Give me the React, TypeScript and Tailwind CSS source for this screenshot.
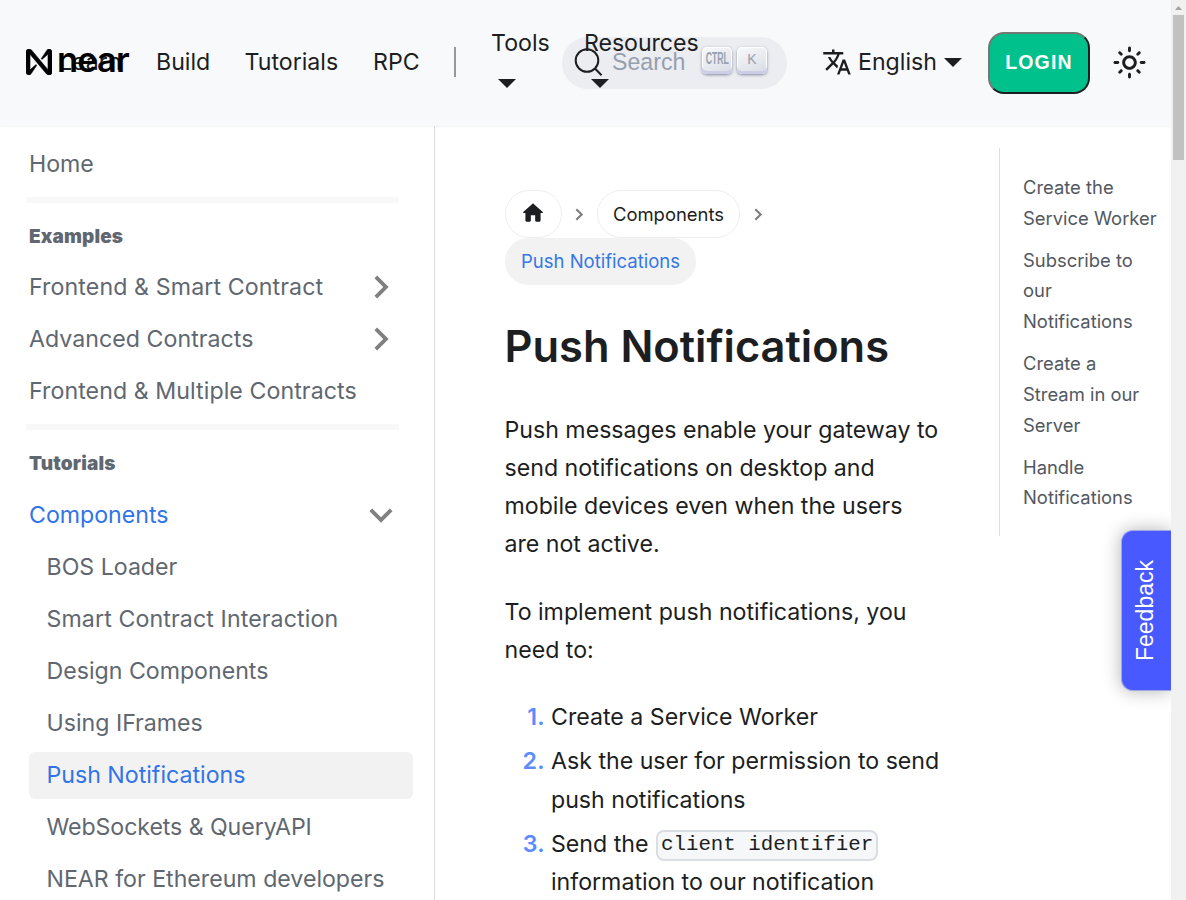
import type { ReactNode } from "react";

const Caret = ({ className = "" }: { className?: string }) => (
  <svg className={className} width="18" height="9" viewBox="0 0 18 9" fill="currentColor">
    <path d="M0 0h18L9 9z" />
  </svg>
);

const Chevron = ({ open = false }: { open?: boolean }) => (
  <svg width="46" height="46" viewBox="0 0 24 24" className={open ? "rotate-180" : "rotate-90"} fill="#808080">
    <path d="M7.41 15.41 12 10.83l4.59 4.58L18 14l-6-6-6 6z" />
  </svg>
);

const Item = ({ children, chevron, active = false, nested = false, blue = false, track = "" }: {
  children: ReactNode; chevron?: "right" | "down"; active?: boolean; nested?: boolean; blue?: boolean; track?: string;
}) => (
  <li
    className={`mb-[5.1px] flex h-[47px] items-center justify-between rounded-[6px] pr-[9px] whitespace-nowrap ${
      nested ? "pl-[17.5px]" : ""
    } ${active ? "bg-[#f2f2f2]" : ""} ${active || blue ? "text-[#3074e8]" : "text-[#606770]"}`}
  >
    <span className={track}>{children}</span>
    {chevron && <Chevron open={chevron === "down"} />}
  </li>
);

const Heading = ({ children }: { children: ReactNode }) => (
  <h3 className="text-[19px] leading-[24px] font-black tracking-[0.15px] text-[#606770]">{children}</h3>
);

const Crumb = () => (
  <svg width="9" height="13" viewBox="0 0 9 13" fill="none" stroke="#7d7d7d" strokeWidth="2.1">
    <path d="M1.3 1.2 6.7 6.5 1.3 11.8" />
  </svg>
);

const Key = ({ children, className }: { children: ReactNode; className: string }) => (
  <kbd className={`flex h-[27px] w-[30px] items-center justify-center rounded-[5px] bg-linear-[-26deg,#d8dce3,#f8f9fb] pb-[3px] text-[#969faf] shadow-[inset_0_-3px_0_0_#cdcde6,inset_0_0_1px_1px_#fff,0_1px_3px_0_rgba(30,35,90,0.5)] ${className}`}>
    {children}
  </kbd>
);

const toc = [
  ["Create the", "Service Worker"],
  ["Subscribe to", "our", "Notifications"],
  ["Create a", "Stream in our", "Server"],
  ["Handle", "Notifications"],
];

export default function App() {
  return (
    <div className="relative flex h-[900px] w-[1186px] overflow-hidden bg-white font-['Inter',sans-serif] text-[23.15px] leading-[38px] text-[#1c1e21] [text-rendering:optimizeLegibility]">
      <div className="flex w-[1171px] shrink-0 flex-col">
        <header className="relative z-10 flex h-[126px] shrink-0 items-start bg-[#f8f9fb] pl-[26px] shadow-[0_1px_2px_0_rgba(0,0,0,0.05)]">
          <div className="relative mt-[43px] flex h-[38px] w-[130px] items-center">
            <svg width="26" height="26" viewBox="0 0 90 90" fill="#000" stroke="#000" strokeWidth="2">
              <path d="M72.2 4.6 53.4 32.5c-1.3 1.9 1.2 4.2 3 2.6L74.9 19c.5-.4 1.2-.1 1.2.6v50.3c0 .7-.9 1-1.3.5L18.9 3.5C17 1.3 14.3 0 11.5 0h-2C4.3 0 0 4.3 0 9.6v70.8C0 85.7 4.3 90 9.6 90c3.3 0 6.4-1.7 8.2-4.6l18.8-27.9c1.3-1.9-1.2-4.2-3-2.6L15.100 71c-.5.4-1.200.1-1.200-.6V20.100c0-.7.9-1 1.300-.5l55.900 66.900c1.900 2.200 4.600 3.500 7.400 3.500h2c5.300 0 9.600-4.300 9.600-9.600V9.600C90 4.300 85.700 0 80.400 0c-3.400 0-6.500 1.700-8.200 4.600z" />
            </svg>
            <span className="absolute left-[33px]">Learn</span>
            <span className="absolute top-[-2px] left-[31px] text-[34.500px] font-semibold tracking-[-0.900px] text-black">near</span>
          </div>
          <nav className="mt-[43px] flex items-center">
            <span className="w-[88.500px]">Build</span>
            <span className="w-[128.500px]">Tutorials</span>
            <span className="w-[81px]">RPC</span>
            <span className="h-[30px] w-[2px] bg-[#96989b]" />
          </nav>
          <div className="mt-[24px] ml-[35px] flex w-[71px] flex-col">
            <span>Tools</span>
            <Caret className="mt-[17px] ml-[7px]" />
          </div>
          <div className="relative mt-[37px] flex h-[52px] w-[225px] items-center rounded-full bg-[#ebedf0] pl-[12px]">
            <svg width="30" height="30" viewBox="0 0 30 30" fill="none" stroke="#1c1e21" strokeWidth="2">
              <circle cx="13" cy="12.500" r="11.300" />
              <path d="m21 20.500 6.500 6.800" />
            </svg>
            <span className="-mt-[3px] ml-[8px] font-['Liberation_Sans',sans-serif] text-[23.150px] text-[#969faf]">Search</span>
            <div className="absolute top-[10px] left-[140px] flex gap-[5px]">
              <Key className="font-['Liberation_Sans',sans-serif] text-[16px]">
                <span className="scale-x-[0.54] font-bold">CTRL</span>
              </Key>
              <Key className="font-['Liberation_Sans',sans-serif] text-[14px]">K</Key>
            </div>
            <div className="absolute top-[-13px] left-[22px] flex flex-col">
              <span className="tracking-[-0.050px]">Resources</span>
              <Caret className="mt-[17px] ml-[7px]" />
            </div>
          </div>
          <div className="mt-[43px] ml-[35px] flex w-[141px] items-center">
            <svg width="30" height="30" viewBox="0 0 24 24" fill="currentColor">
              <path d="M12.870 15.070l-2.540-2.510.03-.03c1.740-1.940 2.980-4.170 3.710-6.530H17V4h-7V2H8v2H1v1.990h11.170C11.500 7.920 10.440 9.750 9 11.350 8.070 10.320 7.300 9.190 6.690 8h-2c.73 1.630 1.730 3.170 2.980 4.560l-5.090 5.020L4 19l5-5 3.110 3.110.76-2.040zM18.500 10h-2L12 22h2l1.120-3h4.750L21 22h2l-4.500-12zm-2.620 7l1.620-4.330L19.120 17h-3.240z" />
            </svg>
            <span className="ml-[6px]">English</span>
            <Caret className="mt-[1px] mr-[1px] ml-auto" />
          </div>
          <button className="mt-[32px] ml-[25px] h-[62px] w-[102px] rounded-[16px] border-2 border-t-[#767676] border-r-[#1c1e21] border-b-[#1c1e21] border-l-[#767676] bg-[#00c08b] font-['Liberation_Sans',sans-serif] text-[19.500px] leading-none font-bold tracking-[1.200px] text-white">
            LOGIN
          </button>
          <svg className="mt-[45px] ml-[22px]" width="35" height="35" viewBox="0 0 24 24" fill="currentColor">
            <path d="M12,9c1.650,0,3,1.350,3,3s-1.350,3-3,3s-3-1.350-3-3S10.350,9,12,9 M12,7c-2.760,0-5,2.240-5,5s2.240,5,5,5s5-2.240,5-5 S14.760,7,12,7z M2,13h2c.55,0,1-.45,1-1s-.45-1-1-1H2c-.55,0-1,.45-1,1S1.450,13,2,13z M20,13h2c.55,0,1-.45,1-1s-.45-1-1-1h-2 c-.55,0-1,.45-1,1S19.450,13,20,13z M11,2v2c0,.55,.45,1,1,1s1-.45,1-1V2c0-.55-.45-1-1-1S11,1.450,11,2z M11,20v2 c0,.55,.45,1,1,1s1-.45,1-1v-2c0-.55-.45-1-1-1S11,19.450,11,20z M5.990,4.580c-.39-.39-1.030-.39-1.410,0c-.39,.39-.39,1.030,0,1.410 l1.060,1.060c.39,.39,1.030,.39,1.410,0s.39-1.030,0-1.410L5.990,4.580z M18.360,16.950c-.39-.39-1.030-.39-1.410,0c-.39,.39-.39,1.030,0,1.410 l1.060,1.060c.39,.39,1.030,.39,1.410,0c.39-.39,.39-1.030,0-1.410L18.360,16.950z M19.420,5.990c.39-.39,.39-1.030,0-1.410 c-.39-.39-1.030-.39-1.410,0l-1.060,1.060c-.39,.39-.39,1.030,0,1.410s1.030,.39,1.410,0L19.420,5.990z M7.050,18.360 c.39-.39,.39-1.030,0-1.410c-.39-.39-1.030-.39-1.410,0l-1.060,1.060c-.39,.39-.39,1.030,0,1.410s1.030,.39,1.410,0L7.050,18.360z" />
          </svg>
        </header>

        <div className="flex min-h-0 flex-1">
          <aside className="w-[435px] shrink-0 border-r border-[#dadde1] pt-[14.500px] pl-[29px]">
            <ul className="w-[384px]">
              <Item>Home</Item>
              <li className="mt-[9px] -ml-[3px] h-[6px] w-[373px] bg-[#f8f8f8]" />
              <li className="mt-[22px] mb-[15px]"><Heading>Examples</Heading></li>
              <Item chevron="right" track="tracking-[0.12px]">Frontend &amp; Smart Contract</Item>
              <Item chevron="right" track="tracking-[0.04px]">Advanced Contracts</Item>
              <Item track="tracking-[0.08px]">Frontend &amp; Multiple Contracts</Item>
              <li className="mt-[9.200px] -ml-[3px] h-[6px] w-[373px] bg-[#f8f8f8]" />
              <li className="mt-[22px] mb-[15.400px]"><Heading>Tutorials</Heading></li>
              <Item chevron="down" blue>Components</Item>
              <Item nested>BOS Loader</Item>
              <Item nested track="tracking-[0.12px]">Smart Contract Interaction</Item>
              <Item nested>Design Components</Item>
              <Item nested>Using IFrames</Item>
              <Item nested active>Push Notifications</Item>
              <Item nested track="tracking-[-0.07px]">WebSockets &amp; QueryAPI</Item>
              <Item nested>NEAR for Ethereum developers</Item>
            </ul>
          </aside>

          <main className="w-[564px] shrink-0 pt-[64px] pl-[70px] whitespace-nowrap">
            <div className="flex items-center text-[18.450px]">
              <span className="flex h-[48px] w-[57px] items-center justify-center rounded-full border border-[#eeeeee]">
                <svg className="-mt-[2px] -ml-[2px]" width="26" height="26" viewBox="0 0 24 24" fill="currentColor">
                  <path d="M10 19v-5h4v5c0 .55.45 1 1 1h3c.55 0 1-.45 1-1v-7h1.700c.46 0 .68-.57.33-.87L12.670 3.600c-.38-.34-.96-.34-1.340 0l-8.360 7.530c-.34.300-.13.870.33.870H5v7c0 .55.45 1 1 1h3c.55 0 1-.45 1-1z" />
                </svg>
              </span>
              <span className="mr-[13px] ml-[13px]"><Crumb /></span>
              <span className="flex h-[48px] w-[143px] items-center justify-center rounded-full border border-[#eeeeee]">Components</span>
              <span className="ml-[13.500px]"><Crumb /></span>
            </div>
            <div className="flex h-[47px] w-[191px] items-center justify-center rounded-full bg-[#f2f2f2] pb-[1px] text-[18.500px] text-[#3578e5]">Push Notifications</div>
            <h1 className="mt-[32px] -ml-[0.500px] text-[43.400px] leading-[58px] font-semibold">Push Notifications</h1>
            <p className="mt-[36px] -ml-[0.500px]">
              Push messages enable your gateway to<br />send notifications on desktop and<br />mobile devices even when the users<br />are not active.
            </p>
            <p className="mt-[30px] -ml-[0.500px]">To implement push notifications, you<br />need to:</p>
            <ol className="mt-[29px] flex flex-col gap-[6px]">
              <li className="flex"><b className="mr-[6px] w-[40px] text-right font-semibold tracking-[0.300px] text-[#5b8cff]">1.</b><span>Create a Service Worker</span></li>
              <li className="flex"><b className="mr-[6px] w-[40px] text-right font-semibold tracking-[0.300px] text-[#5b8cff]">2.</b><span className="leading-[38.500px]">Ask the user for permission to send<br />push notifications</span></li>
              <li className="flex"><b className="mr-[6px] w-[40px] text-right font-semibold tracking-[0.300px] text-[#5b8cff]">3.</b><span>Send the <code className="ml-[1px] inline-block h-[31px] rounded-[8px] border-2 border-[#dadde1] bg-[#f6f7f8] px-[3px] pb-[1px] align-middle font-['Liberation_Mono',monospace] text-[20.800px] leading-[25px]">client identifier</code><br />information to our notification</span></li>
            </ol>
          </main>

          <div className="mt-[22px] h-[388px] w-[172px] border-l border-[#dadde1] pt-[24px] pl-[23px]">
            <ul className="flex flex-col gap-[11.300px] text-[18.400px] leading-[30.700px] whitespace-nowrap text-[#525860]">
              {toc.map((lines, i) => (
                <li key={i}>{lines.map((l) => <span key={l} className="block">{l}</span>)}</li>
              ))}
            </ul>
          </div>
        </div>
      </div>

      <div className="flex w-[15px] flex-col items-center bg-[#f1f1f1]">
        <svg width="15" height="15" viewBox="0 0 15 15" fill="#a3a3a3"><path d="M4 10h7L7.500 6z" /></svg>
        <div className="h-[145px] w-[11px] bg-[#c1c1c1]" />
      </div>

      <div className="absolute top-[500px] left-[1071px] z-20 h-[221px] w-[100px] overflow-hidden pt-[30px]">
        <div className="ml-auto flex h-[161px] w-[50px] items-center justify-center rounded-l-[12px] border border-r-0 border-[#a0a8e8] bg-[#485aff] shadow-[0_0_18px_rgba(0,0,0,0.300)]">
          <span className="mr-[2px] -rotate-90 font-['Liberation_Sans',sans-serif] text-[23px] leading-none text-white">Feedback</span>
        </div>
      </div>
    </div>
  );
}
